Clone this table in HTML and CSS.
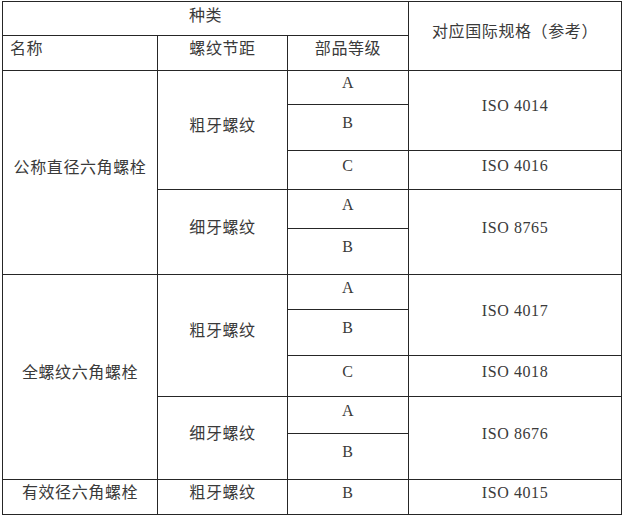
FILE: index.html
```html
<!DOCTYPE html>
<html lang="zh-CN">
<head>
<meta charset="utf-8">
<title>六角螺栓种类</title>
<link rel="stylesheet" href="styles.css">
</head>
<body>
<div class="sheet" role="table">
  <div class="cell h-kind" role="columnheader">种类</div>
  <div class="cell h-iso" role="columnheader">对应国际规格（参考）</div>
  <div class="cell h-name left" role="columnheader">名称</div>
  <div class="cell h-pitch" role="columnheader">螺纹节距</div>
  <div class="cell h-grade" role="columnheader">部品等级</div>

  <div class="cell n1">公称直径六角螺栓</div>
  <div class="cell p1">粗牙螺纹</div>
  <div class="cell g r3">A</div>
  <div class="cell g r4">B</div>
  <div class="cell g r5">C</div>
  <div class="cell s1">ISO 4014</div>
  <div class="cell s2">ISO 4016</div>
  <div class="cell p2">细牙螺纹</div>
  <div class="cell g r6">A</div>
  <div class="cell g r7">B</div>
  <div class="cell s3">ISO 8765</div>

  <div class="cell n2">全螺纹六角螺栓</div>
  <div class="cell p3">粗牙螺纹</div>
  <div class="cell g r8">A</div>
  <div class="cell g r9">B</div>
  <div class="cell g r10">C</div>
  <div class="cell s4">ISO 4017</div>
  <div class="cell s5">ISO 4018</div>
  <div class="cell p4">细牙螺纹</div>
  <div class="cell g r11">A</div>
  <div class="cell g r12">B</div>
  <div class="cell s6">ISO 8676</div>

  <div class="cell n3">有效径六角螺栓</div>
  <div class="cell p5">粗牙螺纹</div>
  <div class="cell g r13">B</div>
  <div class="cell s7">ISO 4015</div>
</div>
</body>
</html>
```
FILE: styles.css
```css
html, body {
  margin: 0;
  padding: 0;
  background: #ffffff;
}

.sheet {
  margin: 1px 0 0 2px;
  width: 620px;
  box-sizing: border-box;
  padding: 1px;
  background: #262626;
  display: grid;
  gap: 1px;
  grid-template-columns: 154px 129px 120px 212px;
  grid-template-rows: 33px 34px 33px 45px 38px 38px 45px 34px 45px 40px 36px 45px 34px;
  font-family: "Liberation Serif", "Noto Sans CJK SC", serif;
  font-size: 16px;
  letter-spacing: 0.6px;
  color: #3a3a3a;
}

.cell {
  background: #ffffff;
  display: flex;
  align-items: center;
  justify-content: center;
  padding: 0 0 9px 0;
  line-height: 22px;
  white-space: nowrap;
}

.cell.left {
  justify-content: flex-start;
  padding-left: 7px;
}

.h-kind { grid-column: 1 / 4; grid-row: 1; padding-bottom: 6px; }
.h-iso { grid-column: 4; grid-row: 1 / 3; }
.h-name { grid-column: 1; grid-row: 2; }
.h-pitch { grid-column: 2; grid-row: 2; }
.h-grade { grid-column: 3; grid-row: 2; }

.n1 { grid-column: 1; grid-row: 3 / 8; }
.p1 { grid-column: 2; grid-row: 3 / 6; }
.p2 { grid-column: 2; grid-row: 6 / 8; }
.s1 { grid-column: 4; grid-row: 3 / 5; }
.s2 { grid-column: 4; grid-row: 5; }
.s3 { grid-column: 4; grid-row: 6 / 8; }

.n2 { grid-column: 1; grid-row: 8 / 13; }
.p3 { grid-column: 2; grid-row: 8 / 11; }
.p4 { grid-column: 2; grid-row: 11 / 13; }
.s4 { grid-column: 4; grid-row: 8 / 10; }
.s5 { grid-column: 4; grid-row: 10; }
.s6 { grid-column: 4; grid-row: 11 / 13; }

.n3 { grid-column: 1; grid-row: 13; }
.p5 { grid-column: 2; grid-row: 13; }
.s7 { grid-column: 4; grid-row: 13; }

.g { grid-column: 3; }
.r3 { grid-row: 3; }
.r4 { grid-row: 4; }
.r5 { grid-row: 5; }
.r6 { grid-row: 6; }
.r7 { grid-row: 7; }
.r8 { grid-row: 8; }
.r9 { grid-row: 9; }
.r10 { grid-row: 10; }
.r11 { grid-row: 11; }
.r12 { grid-row: 12; }
.r13 { grid-row: 13; }
```
